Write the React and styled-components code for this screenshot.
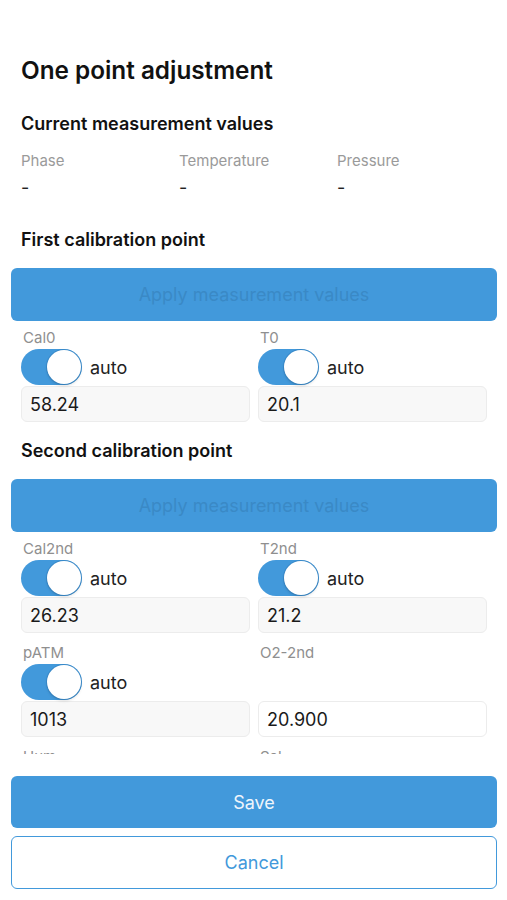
import React, { useState } from "react";
import styled, { createGlobalStyle } from "styled-components";

const GlobalStyle = createGlobalStyle`
  html, body {
    margin: 0;
    padding: 0;
    background: #ffffff;
    font-family: Inter, "Noto Sans", "Liberation Sans", sans-serif;
    color: #111111;
  }
  * {
    box-sizing: border-box;
  }
`;

const BLUE = "#4299db";

const Screen = styled.div`
  width: 507px;
  height: 900px;
  display: flex;
  flex-direction: column;
  background: #ffffff;
`;

const Content = styled.div`
  height: 754px;
  overflow: hidden;
  padding-top: 55px;
`;

const Title = styled.h1`
  margin: 0;
  padding: 0 21px;
  font-size: 24.3px;
  line-height: 30px;
  font-weight: 600;
`;

const SectionTitle = styled.h2`
  margin: ${({ top }) => top}px 0 0;
  padding: 0 21px;
  font-size: 18px;
  line-height: 24px;
  font-weight: 600;
`;

const MeasureGrid = styled.div`
  display: grid;
  grid-template-columns: repeat(3, 158px);
  padding: 0 21px;
  margin-top: 15px;
`;

const MeasureLabel = styled.div`
  font-size: 15px;
  line-height: 20px;
  color: #9a9a9a;
`;

const MeasureValue = styled.div`
  margin-top: 7px;
  font-size: 18px;
  line-height: 20px;
  color: #222222;
`;

const ApplyButton = styled.button`
  display: block;
  width: 486px;
  height: 53px;
  margin: 16px 0 0 11px;
  border: none;
  border-radius: 6px;
  background: ${BLUE};
  color: #3a89c6;
  font-family: inherit;
  font-size: 18px;
`;

const FieldGrid = styled.div`
  display: grid;
  grid-template-columns: 229px 229px;
  column-gap: 8px;
  row-gap: 11px;
  padding: 0 21px;
  margin-top: 8px;
`;

const Field = styled.div`
  display: flex;
  flex-direction: column;
`;

const FieldLabel = styled.div`
  padding-left: 2px;
  font-size: 15px;
  line-height: 18px;
  color: #8f8f8f;
  margin-bottom: 2px;
`;

const ToggleRow = styled.label`
  display: flex;
  align-items: center;
  gap: 8px;
  height: 36px;
  margin-bottom: 1px;
  font-size: 18px;
  color: #222222;
`;

const Spacer = styled.div`
  height: 37px;
`;

const Track = styled.span`
  position: relative;
  display: inline-block;
  width: 61px;
  height: 36px;
  border-radius: 18px;
  background: ${({ on }) => (on ? BLUE : "#e5e5ea")};
  cursor: pointer;
`;

const Knob = styled.span`
  position: absolute;
  top: 1px;
  left: ${({ on }) => (on ? "26px" : "1px")};
  width: 34px;
  height: 34px;
  border-radius: 50%;
  background: #ffffff;
  box-shadow: 0 0 0 1px rgba(40, 110, 170, 0.35), 0 2px 3px rgba(0, 0, 0, 0.12);
`;

const ValueInput = styled.input`
  width: 100%;
  height: 36px;
  padding: 0 8px;
  border: 1px solid #ececec;
  border-radius: 6px;
  background: ${({ plain }) => (plain ? "#ffffff" : "#f8f8f8")};
  font-family: inherit;
  font-size: 18px;
  color: #1a1a1a;
  outline: none;
`;

const Footer = styled.div`
  display: flex;
  flex-direction: column;
  gap: 8px;
  padding: 22px 10px 11px 11px;
`;

const SaveButton = styled.button`
  height: 52px;
  border: none;
  border-radius: 6px;
  background: ${BLUE};
  color: #eef5fc;
  font-family: inherit;
  font-size: 18px;
`;

const CancelButton = styled.button`
  height: 53px;
  border: 1px solid ${BLUE};
  border-radius: 6px;
  background: #ffffff;
  color: ${BLUE};
  font-family: inherit;
  font-size: 18px;
`;

const Toggle = ({ initial }) => {
  const [on, setOn] = useState(initial);
  return (
    <ToggleRow onClick={() => setOn(!on)}>
      <Track on={on ? 1 : 0}>
        <Knob on={on ? 1 : 0} />
      </Track>
      auto
    </ToggleRow>
  );
};

const CalField = ({ label, value, auto, plain }) => (
  <Field>
    <FieldLabel>{label}</FieldLabel>
    {auto ? <Toggle initial={true} /> : <Spacer />}
    <ValueInput defaultValue={value} plain={plain ? 1 : 0} />
  </Field>
);

export default function App() {
  return (
    <>
      <GlobalStyle />
      <Screen>
        <Content>
          <Title>One point adjustment</Title>
          <SectionTitle top={27}>Current measurement values</SectionTitle>
          <MeasureGrid>
            {["Phase", "Temperature", "Pressure"].map((name) => (
              <div key={name}>
                <MeasureLabel>{name}</MeasureLabel>
                <MeasureValue>-</MeasureValue>
              </div>
            ))}
          </MeasureGrid>

          <SectionTitle top={30}>First calibration point</SectionTitle>
          <ApplyButton disabled>Apply measurement values</ApplyButton>
          <FieldGrid>
            <CalField label="Cal0" value="58.24" auto />
            <CalField label="T0" value="20.1" auto />
          </FieldGrid>

          <SectionTitle top={17}>Second calibration point</SectionTitle>
          <ApplyButton disabled>Apply measurement values</ApplyButton>
          <FieldGrid>
            <CalField label="Cal2nd" value="26.23" auto />
            <CalField label="T2nd" value="21.2" auto />
            <CalField label="pATM" value="1013" auto />
            <CalField label="O2-2nd" value="20.900" plain />
            <CalField label="Hum" value="0" auto />
            <CalField label="Sal" value="0" plain />
          </FieldGrid>
        </Content>
        <Footer>
          <SaveButton>Save</SaveButton>
          <CancelButton>Cancel</CancelButton>
        </Footer>
      </Screen>
    </>
  );
}
